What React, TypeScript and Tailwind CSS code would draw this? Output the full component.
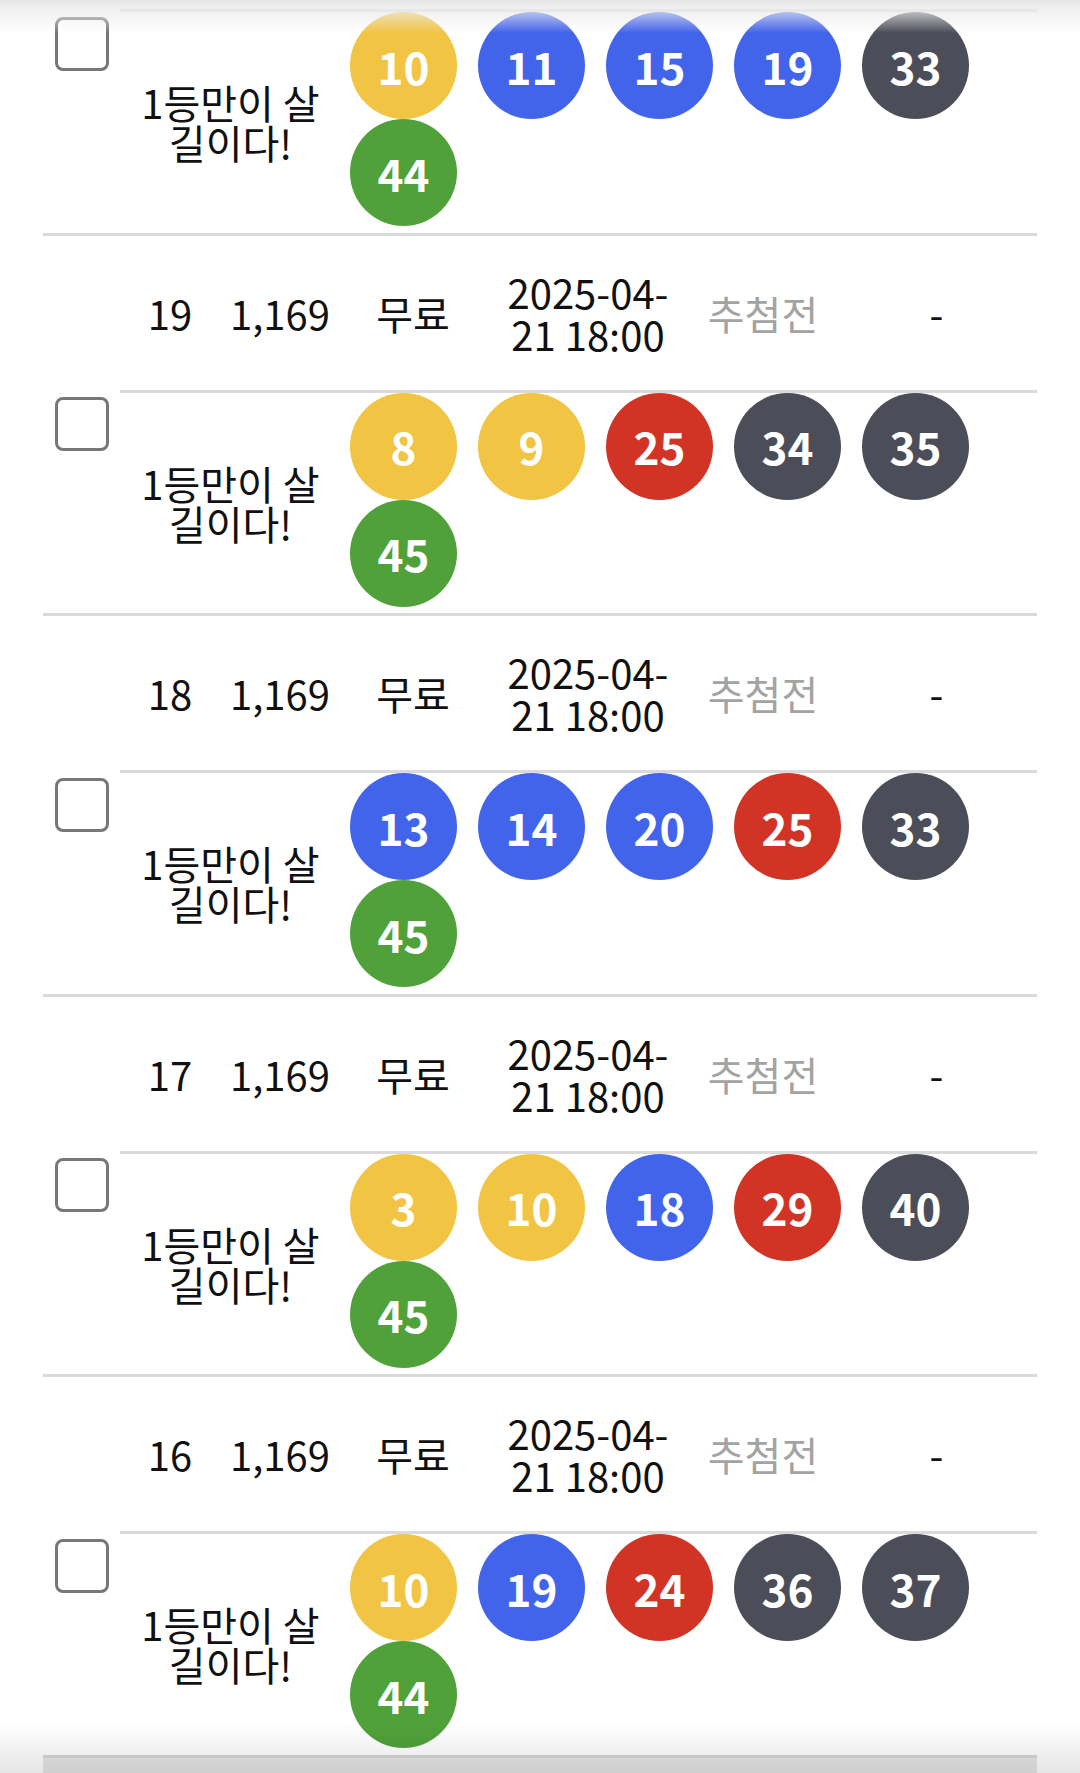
import React from 'react';

type Entry = {
  no: number;
  balls: number[];
};

const entries: Entry[] = [
  { no: 20, balls: [10, 11, 15, 19, 33, 44] },
  { no: 19, balls: [8, 9, 25, 34, 35, 45] },
  { no: 18, balls: [13, 14, 20, 25, 33, 45] },
  { no: 17, balls: [3, 10, 18, 29, 40, 45] },
  { no: 16, balls: [10, 19, 24, 36, 37, 44] },
];

function ballColor(n: number) {
  if (n <= 10) return 'bg-[#f1c443]';
  if (n <= 20) return 'bg-[#4264eb]';
  if (n <= 30) return 'bg-[#d13425]';
  if (n <= 40) return 'bg-[#4b4e58]';
  return 'bg-[#50a13a]';
}

function Ball({ n }: { n: number }) {
  return (
    <div
      className={`w-[107px] h-[107px] rounded-full flex items-center justify-center text-white font-bold text-[44px] leading-none ${ballColor(n)}`}
    >
      {n}
    </div>
  );
}

function Checkbox() {
  return <div className="w-[54px] h-[54px] rounded-[8px] border-[3px] border-[#777777] bg-white" />;
}

function Row({ entry }: { entry: Entry }) {
  return (
    <div className="flex border-t-[3px] border-[#dadada]">
      <div className="w-[77px] flex items-center justify-center">
        <Checkbox />
      </div>
      <div className="flex-1 flex flex-col">
        <div className="h-[154px] grid grid-cols-[100px_120px_146px_204px_146px_201px] items-center text-center">
          <span>{entry.no}</span>
          <span>1,169</span>
          <span>무료</span>
          <span className="leading-[42px]">
            2025-04-
            <br />
            21 18:00
          </span>
          <span className="text-[#a3a3a3]">추첨전</span>
          <span>-</span>
        </div>
        <div className="h-[223.5px] border-t-[3px] border-[#dadada] flex">
          <div className="w-[221px] flex items-center justify-center text-center leading-[40px]">
            <span>
              1등만이 살
              <br />
              길이다!
            </span>
          </div>
          <div className="pl-[9px] w-[650px] flex flex-wrap content-start gap-x-[21px]">
            {entry.balls.map((b, i) => (
              <Ball key={i} n={b} />
            ))}
          </div>
        </div>
      </div>
    </div>
  );
}

export default function App() {
  return (
    <div
      className="relative w-[1080px] h-[1773px] overflow-hidden bg-white text-[#111111] text-[40px]"
      style={{ fontFamily: '"Noto Sans CJK KR", "Noto Sans", sans-serif' }}
    >
      <div className="ml-[43px] w-[994px] mt-[-148px]">
        {entries.map((e) => (
          <Row key={e.no} entry={e} />
        ))}
        <div className="h-[200px] border-t-[3px] border-[#d6d6d6] bg-[#e6e6e6]" />
      </div>

      {/* top / bottom edge shadows */}
      <div className="absolute top-0 left-0 w-full h-[3px] bg-[#e6e6e6]" />
      <div className="absolute top-[3px] left-0 w-full h-[30px] bg-linear-to-b from-[#ececec] to-white/0" />
      <div className="absolute bottom-0 left-0 w-full h-[50px] bg-linear-to-b from-white/0 to-black/10" />
    </div>
  );
}
